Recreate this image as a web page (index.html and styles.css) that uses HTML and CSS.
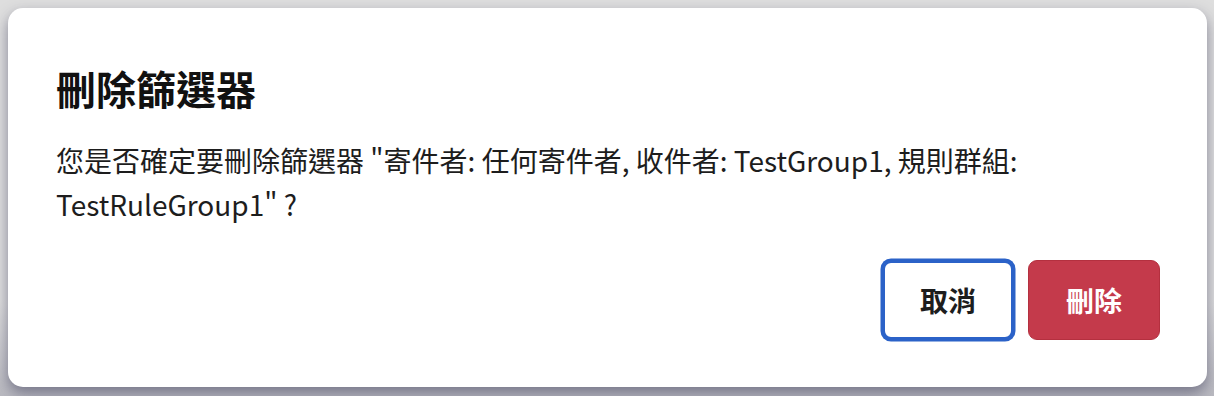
FILE: index.html
```html
<!DOCTYPE html>
<html lang="zh-Hant">
<head>
<meta charset="utf-8">
<title>刪除篩選器</title>
<link rel="stylesheet" href="styles.css">
</head>
<body>
<div class="dialog" role="dialog" aria-labelledby="dlg-title">
  <h2 class="dialog-title" id="dlg-title">刪除篩選器</h2>
  <p class="dialog-body">您是否確定要刪除篩選器 "寄件者: 任何寄件者, 收件者: TestGroup1, 規則群組: TestRuleGroup1" ?</p>
  <div class="dialog-actions">
    <button class="btn btn-cancel" type="button">取消</button>
    <button class="btn btn-delete" type="button">刪除</button>
  </div>
</div>
</body>
</html>
```
FILE: styles.css
```css
html, body {
  margin: 0;
  padding: 0;
}
body {
  width: 1214px;
  height: 396px;
  overflow: hidden;
  background: linear-gradient(#dedede 0, #dedede 300px, #b9b9c0 396px);
  font-family: "Noto Sans CJK TC", "Noto Sans", sans-serif;
  color: #1d1d1d;
  padding: 8px 7px 0 8px;
  box-sizing: border-box;
}
.dialog {
  background: #ffffff;
  border-radius: 15px;
  height: 379px;
  box-sizing: border-box;
  padding: 52px 47px 47px 48px;
  display: flex;
  flex-direction: column;
  box-shadow: 0 6px 14px rgba(60, 60, 90, 0.55);
}
.dialog-title {
  margin: 0;
  font-size: 40px;
  line-height: 56px;
  font-weight: 700;
  color: #111;
}
.dialog-body {
  margin: 22px 0 0 0;
  font-size: 28px;
  line-height: 44px;
  font-weight: 400;
  color: #1d1d1d;
  max-width: 1000px;
}
.dialog-actions {
  margin-top: auto;
  display: flex;
  justify-content: flex-end;
  gap: 14px;
}
.btn {
  width: 132px;
  height: 80px;
  border-radius: 9px;
  font-family: "Noto Sans CJK TC", "Noto Sans", sans-serif;
  font-size: 28px;
  font-weight: 700;
  cursor: pointer;
  box-sizing: border-box;
  padding: 0;
}
.btn-cancel {
  background: #ffffff;
  color: #1d1d1d;
  border: 3px solid #2b62c8;
  box-shadow: 0 0 0 1.5px #2b62c8;
}
.btn-delete {
  background: #c43a4b;
  color: #ffffff;
  border: 1px solid #b4303f;
}
```
